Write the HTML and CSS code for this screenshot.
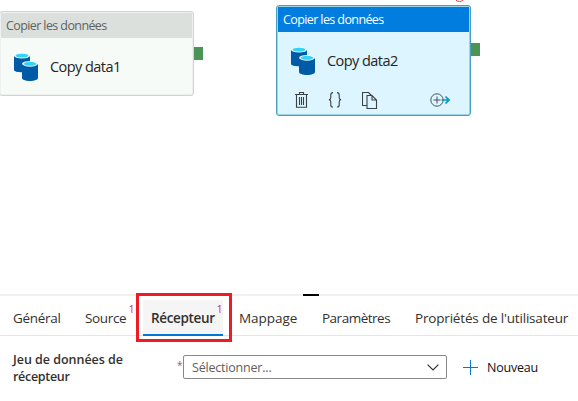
FILE: index.html
```html
<!DOCTYPE html>
<html lang="fr">
<head>
<meta charset="utf-8">
<title>Pipeline</title>
<link rel="stylesheet" href="styles.css">
</head>
<body>
<svg width="0" height="0" class="defs">
  <symbol id="copy" viewBox="0 0 24 28">
    <path fill="#005ba6" d="M0 3v14c0 1.300 3.600 2.300 8 2.300s8-1 8-2.300V3z"/>
    <ellipse cx="8" cy="2.800" rx="8" ry="2.700" fill="#eaf7fb"/>
    <ellipse cx="8" cy="2.700" rx="6.300" ry="1.900" fill="#32d4f5"/>
    <path fill="#005ba6" d="M8 11v14c0 1.600 3.600 3 8 3s8-1.400 8-3V11z"/>
    <ellipse cx="16" cy="10.800" rx="8" ry="2.900" fill="#eaf7fb"/>
    <ellipse cx="16" cy="10.800" rx="6.300" ry="2" fill="#32d4f5"/>
  </symbol>
</svg>
<main class="canvas">
  <section class="node node-first">
    <header class="node-head"><span>Copier les données</span></header>
    <div class="node-body"><svg class="copy-icon"><use href="#copy"/></svg><span class="node-name">Copy data1</span></div>
    <i class="port"></i>
  </section>
  <i class="error-ring"></i>
  <section class="node node-second">
    <header class="node-head"><span>Copier les données</span></header>
    <div class="node-body"><svg class="copy-icon"><use href="#copy"/></svg><span class="node-name">Copy data2</span></div>
    <div class="actions">
      <svg width="13" height="16" viewBox="0 0 13 16"><path d="M0 2.500h13M4.500 2.500v-2h4v2M1.500 2.500v12.800h10V2.500M4.500 5v8M6.500 5v8M8.500 5v8"/></svg>
      <svg width="14" height="16" viewBox="0 0 14 16"><path d="M5 .6C3.200.6 2.800 1.300 2.800 2.700v3c0 1.300-.6 2-1.900 2.100 1.300.1 1.900.9 1.900 2.100v3c0 1.400.4 2.100 2.200 2.100M9 .6c1.800 0 2.200.7 2.200 2.100v3c0 1.300.6 2 1.900 2.100-1.300.1-1.900.9-1.900 2.100v3c0 1.400-.4 2.100-2.200 2.100"/></svg>
      <svg width="16" height="17" viewBox="0 0 16 17"><path d="M4.500 13.500h-4V.5h6l3 3M5 3.500h5l4.500 4.500v8.500H5zM10 3.500V8h4.500"/></svg>
      <svg class="add-output" width="21" height="14" viewBox="0 0 21 14"><circle cx="7" cy="7" r="6.200"/><path d="M7 3.500v7M3.500 7h7"/><path class="arrow" d="M11.500 7H19M15.500 3.500 19 7l-3.500 3.500"/></svg>
    </div>
    <i class="port"></i>
  </section>
</main>
<section class="panel">
  <i class="handle"></i>
  <nav class="tabs">
    <a class="tab general"><span>Général</span></a>
    <a class="tab source"><span>Source</span><sup>1</sup></a>
    <a class="tab sink"><span>Récepteur</span><sup>1</sup><i class="highlight"></i></a>
    <a class="tab mapping"><span>Mappage</span></a>
    <a class="tab params"><span>Paramètres</span></a>
    <a class="tab props"><span>Propriétés de l'utilisateur</span></a>
  </nav>
  <div class="form">
    <label class="label">Jeu de données de<br><span>récepteur</span></label>
    <span class="required">*</span>
    <div class="select"><span>Sélectionner...</span><svg width="12" height="7" viewBox="0 0 12 7"><path d="M.6.6 6 6 11.400.6"/></svg></div>
    <button class="new"><svg width="15" height="15" viewBox="0 0 15 15"><path d="M7.500 0v15M0 7.500h15"/></svg><span>Nouveau</span></button>
  </div>
</section>
</body>
</html>
```
FILE: styles.css
```css
* { box-sizing: border-box; }
body {
  margin: 0;
  width: 578px;
  height: 401px;
  overflow: hidden;
  background: #fff;
  color: #323130;
  font: 13px/18px "Open Sans", "Noto Sans", sans-serif;
}
.defs { position: absolute; }
.canvas { position: relative; height: 294px; }

.node {
  position: absolute;
  width: 195px;
  padding: 1px;
  border: 1px solid #d0d3d1;
  border-radius: 3px;
  background: #f7fbf8;
  box-shadow: inset 0 0 0 1px #eef1ef;
}
.node-first { left: -1px; top: 11px; height: 85px; }
.node-second {
  left: 276px;
  top: 5px;
  height: 111px;
  border-color: #4b9fba;
  background: #ddf5fe;
  box-shadow: inset 0 0 0 1px #9ed3e6;
}
.node-head {
  height: 25px;
  padding-left: 5px;
  line-height: 25px;
  font-size: 12.500px;
  letter-spacing: -.6px;
  background: #dce0dd;
  color: #60625f;
  white-space: nowrap;
}
.node-second .node-head { background: #007ddf; color: #fff; }
.node-body {
  display: flex;
  align-items: center;
  height: 57px;
  padding-left: 13px;
  gap: 12px;
}
.copy-icon { width: 24px; height: 28px; }
.node-name {
  font-size: 14.500px;
  letter-spacing: -.55px;
  color: #252423;
  white-space: nowrap;
}
.port {
  position: absolute;
  left: 194px;
  top: 35px;
  width: 9px;
  height: 13px;
  background: #4a9455;
}
.node-second .port { top: 37px; }
.error-ring {
  position: absolute;
  left: 454px;
  top: -9px;
  width: 11px;
  height: 11px;
  border: 1px solid #f03a3a;
  border-radius: 50%;
}
.actions {
  display: flex;
  align-items: center;
  height: 22px;
  padding: 0 18px 0 17px;
  gap: 20px;
}
.actions svg { fill: none; stroke: #3b4246; stroke-width: 1.100; }
.actions .add-output { margin-left: auto; stroke-width: .9; }
.actions .arrow { stroke: #0099cc; stroke-width: 1.700; }

.panel { position: relative; border-top: 2px solid #eff1f0; }
.handle {
  position: absolute;
  left: 303px;
  top: -2px;
  width: 16px;
  height: 2px;
  background: #000;
}
.tabs {
  display: flex;
  align-items: flex-end;
  gap: 8px;
  height: 40px;
  padding-left: 5px;
  border-bottom: 1px solid #e3e4e4;
}
.tab {
  position: relative;
  flex: none;
  height: 35px;
  padding-left: 8px;
  line-height: 36px;
  font-size: 13.500px;
  letter-spacing: -.45px;
  white-space: nowrap;
}
.general { width: 64px; letter-spacing: -.3px; }
.source { width: 58px; letter-spacing: -.35px; }
.sink {
  width: 80px;
  margin-bottom: -1px;
  height: 36px;
  border-bottom: 2px solid #0078d4;
  background: #f5f5f5;
  font-weight: 600;
  letter-spacing: -.35px;
}
.mapping { width: 75px; letter-spacing: -.05px; }
.params { width: 85px; letter-spacing: -.5px; }
.props { width: 170px; letter-spacing: -.18px; }
.tab sup {
  position: absolute;
  right: 1px;
  top: 2px;
  font-size: 10px;
  line-height: 14px;
  font-weight: 400;
  color: #c0207e;
}
.highlight {
  position: absolute;
  inset: -7px -9px -8px -7px;
  border: 3px solid #ed1c24;
}
.form {
  display: flex;
  align-items: flex-start;
  padding: 15px 0 0 13px;
}
.label {
  width: 164px;
  line-height: 17px;
  font-size: 12.500px;
  font-weight: 600;
  letter-spacing: -.02px;
}
.label span { letter-spacing: -.3px; }
.required { width: 6px; padding-top: 5px; font-size: 10px; line-height: 18px; color: #a4507a; }
.select {
  display: flex;
  align-items: center;
  justify-content: space-between;
  width: 264px;
  height: 24px;
  margin-top: 4px;
  padding: 1px 7px 0 8px;
  border: 1px solid #8a8886;
  border-radius: 2px;
  font-size: 12.500px;
  letter-spacing: -.2px;
  color: #605e5c;
}
.select svg { fill: none; stroke: #323130; stroke-width: 1.200; }
.new {
  display: flex;
  align-items: center;
  gap: 9px;
  height: 24px;
  margin: 4px 0 0 16px;
  padding: 0;
  border: 0;
  background: none;
  color: #111;
  font: 12.500px/18px "Open Sans", "Noto Sans", sans-serif;
  letter-spacing: -.2px;
}
.new span { padding-top: 2px; }
.new svg { fill: none; stroke: #0078d4; stroke-width: 1; }
```
